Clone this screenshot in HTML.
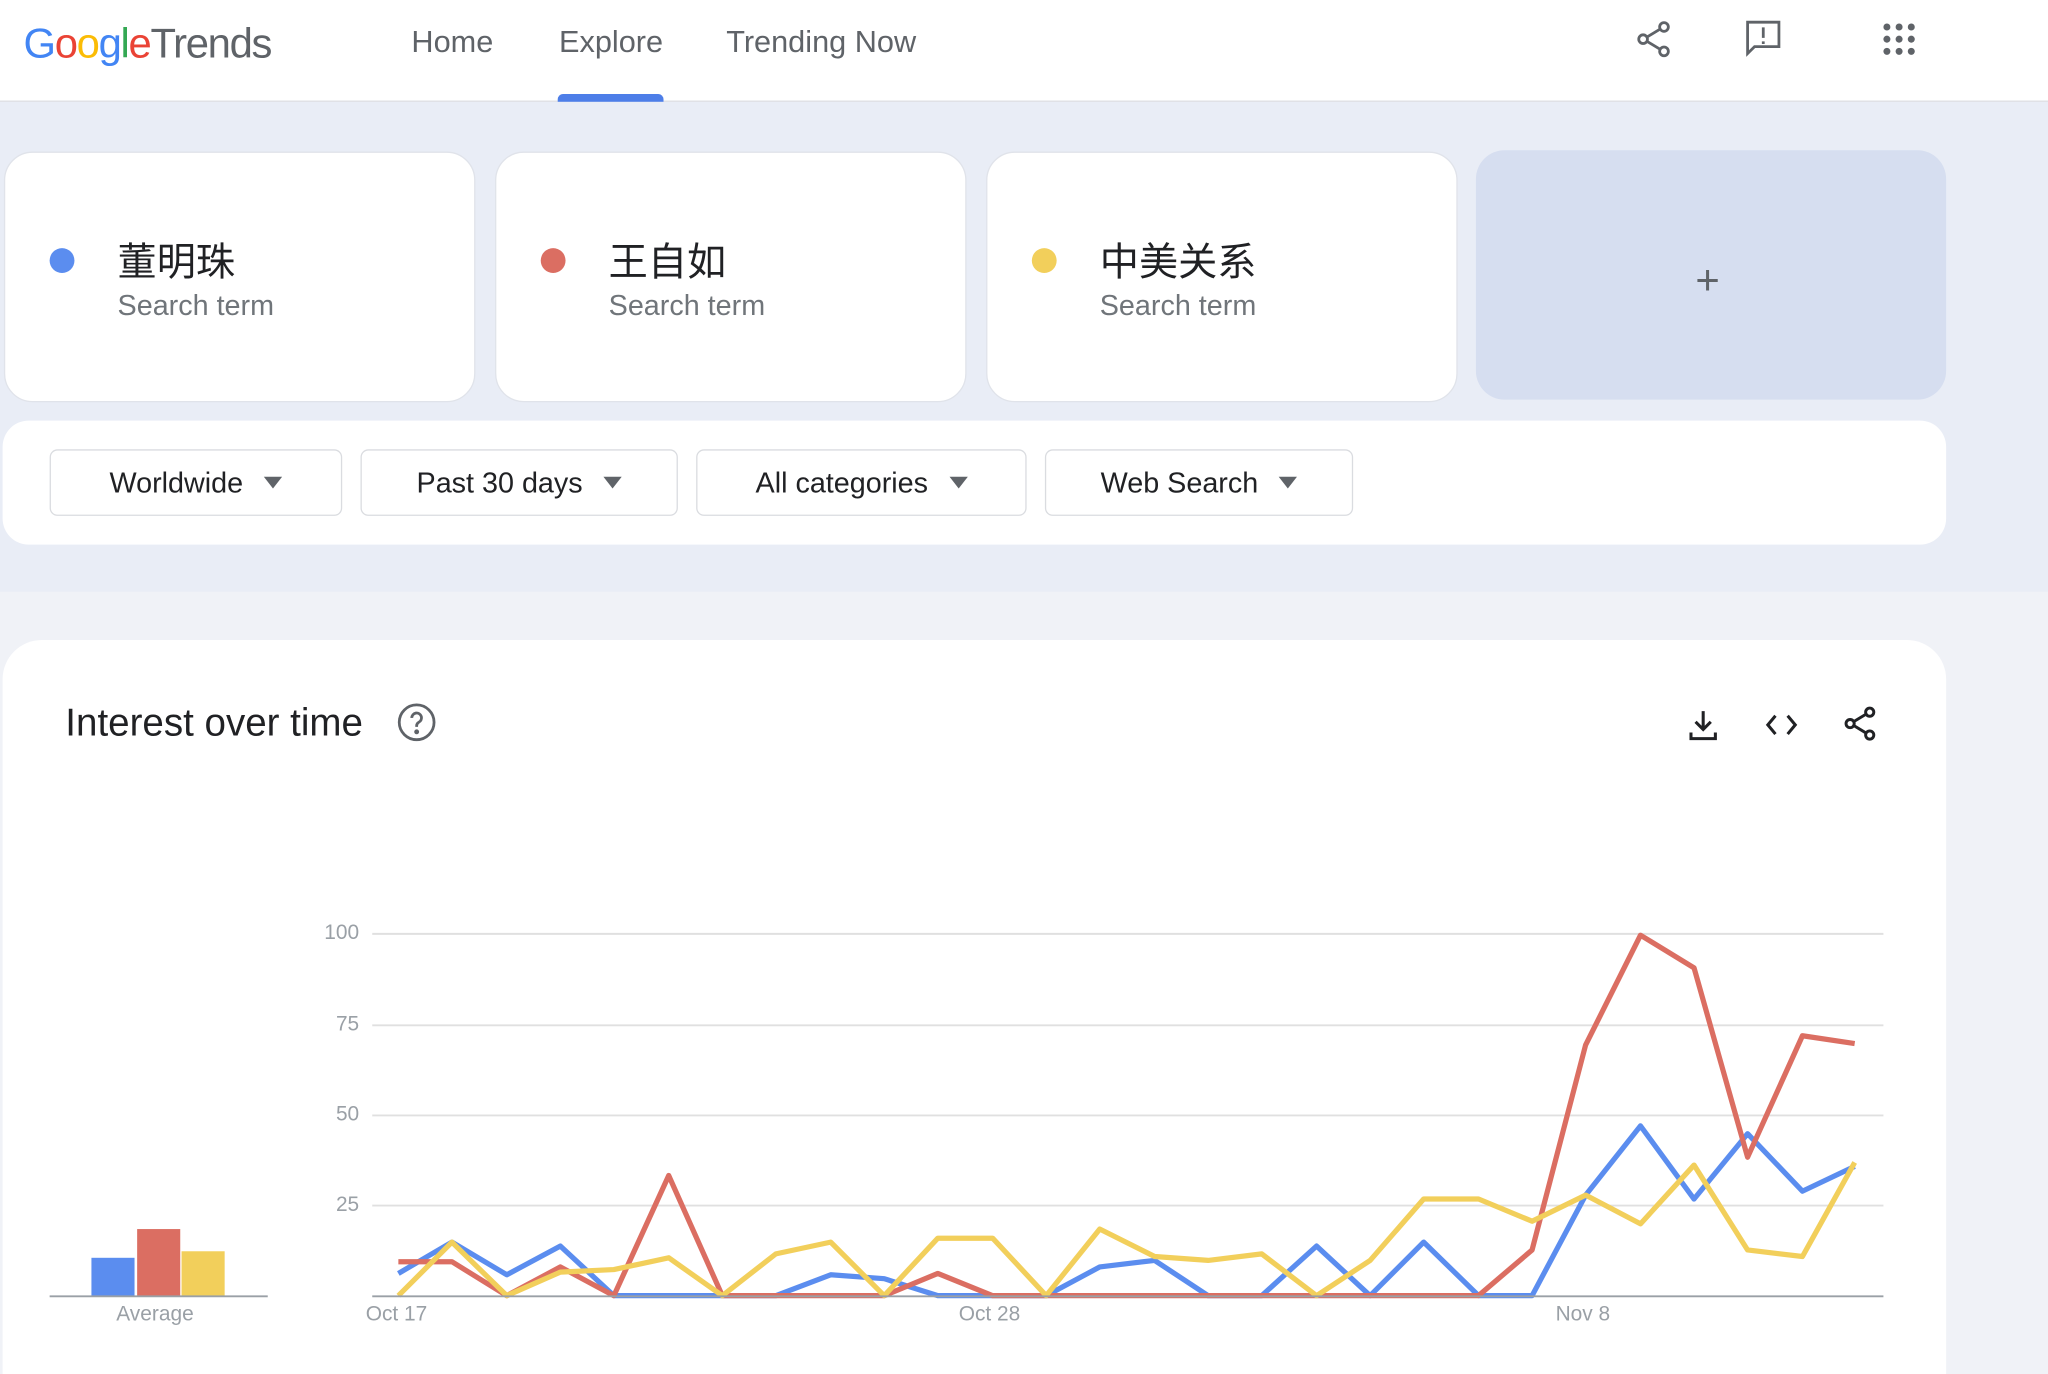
<!DOCTYPE html>
<html><head><meta charset="utf-8"><style>
*{margin:0;padding:0;box-sizing:border-box}
html,body{width:2048px;height:1374px;overflow:hidden;background:#f0f2f7}
#w{width:1568px;height:1052px;transform:scale(1.306122);transform-origin:0 0;position:relative;font-family:"Liberation Sans","Noto Sans CJK SC",sans-serif;background:#f0f2f7}
.a{position:absolute}
.hdr{left:0;top:0;width:1568px;height:78px;background:#fff;border-bottom:1px solid #dadce0}
.nav{top:19px;font-size:23.5px;color:#5f6368}
.band{left:0;top:78px;width:1568px;height:375px;background:#e9edf6}
.card{background:#fff;border:1px solid #e0e3ea;border-radius:22px}
.dot{width:19px;height:19px;border-radius:50%}
.term{font-size:30px;color:#202124;top:176px}
.st{font-size:22px;color:#70757a;top:221px}
.btn{top:344px;height:51px;border:1px solid #dadce0;border-radius:6px;background:#fff;font-size:22px;color:#202124;display:flex;align-items:center;justify-content:center;gap:16px}
.tri{width:0;height:0;border-left:7px solid transparent;border-right:7px solid transparent;border-top:9px solid #5f6368}
.yl{font-size:16px;color:#9aa0a6;width:40px;text-align:right;left:235px}
.xl{font-size:16px;color:#9aa0a6;top:998px}
</style></head><body><div id="w">
<div class="a hdr"></div>
<div class="a" style="left:18px;top:15px;font-size:32px;letter-spacing:-1px"><span style="color:#4285f4">G</span><span style="color:#ea4335">o</span><span style="color:#fbbc05">o</span><span style="color:#4285f4">g</span><span style="color:#34a853">l</span><span style="color:#ea4335">e</span><span style="color:#5f6368">Trends</span></div>
<div class="a nav" style="left:315px">Home</div>
<div class="a nav" style="left:428px">Explore</div>
<div class="a nav" style="left:556px">Trending Now</div>
<div class="a" style="left:427px;top:72px;width:81px;height:6px;background:#4d7ee8;border-radius:4px 4px 0 0"></div>
<svg class="a" style="left:1250px;top:14px" width="32" height="32" viewBox="0 0 24 24" fill="none" stroke="#5f6368" stroke-width="1.6"><circle cx="18" cy="5" r="2.5"/><circle cx="6" cy="12" r="2.5"/><circle cx="18" cy="19" r="2.5"/><path d="M8.2 10.8 15.8 6.2M8.2 13.2l7.6 4.6"/></svg>
<svg class="a" style="left:1334px;top:13px" width="32" height="32" viewBox="0 0 24 24" fill="none" stroke="#5f6368" stroke-width="1.6"><path d="M3 3h18v14H7l-4 4z"/><path d="M12 6v6M12 14v1.5"/></svg>
<svg class="a" style="left:1440px;top:16px" width="28" height="28" viewBox="0 0 24 24" fill="#5f6368"><circle cx="4" cy="4" r="2.3"/><circle cx="12" cy="4" r="2.3"/><circle cx="20" cy="4" r="2.3"/><circle cx="4" cy="12" r="2.3"/><circle cx="12" cy="12" r="2.3"/><circle cx="20" cy="12" r="2.3"/><circle cx="4" cy="20" r="2.3"/><circle cx="12" cy="20" r="2.3"/><circle cx="20" cy="20" r="2.3"/></svg>
<div class="a band"></div>
<div class="a card" style="left:3px;top:116px;width:361px;height:192px"></div>
<div class="a card" style="left:379px;top:116px;width:361px;height:192px"></div>
<div class="a card" style="left:755px;top:116px;width:361px;height:192px"></div>
<div class="a" style="left:1130px;top:115px;width:360px;height:191px;background:#d6def0;border-radius:22px"></div>
<div class="a" style="left:1298px;top:196px;font-size:32px;color:#5f6368;font-weight:300">+</div>
<div class="a dot" style="left:38px;top:190px;background:#5b8def"></div>
<div class="a dot" style="left:414px;top:190px;background:#db6e62"></div>
<div class="a dot" style="left:790px;top:190px;background:#f2cf5b"></div>
<div class="a term" style="left:90px">董明珠</div>
<div class="a term" style="left:466px">王自如</div>
<div class="a term" style="left:842px">中美关系</div>
<div class="a st" style="left:90px">Search term</div>
<div class="a st" style="left:466px">Search term</div>
<div class="a st" style="left:842px">Search term</div>
<div class="a" style="left:2px;top:322px;width:1488px;height:95px;background:#fff;border-radius:20px"></div>
<div class="a btn" style="left:38px;width:224px">Worldwide<span class="tri"></span></div>
<div class="a btn" style="left:276px;width:243px">Past 30 days<span class="tri"></span></div>
<div class="a btn" style="left:533px;width:253px">All categories<span class="tri"></span></div>
<div class="a btn" style="left:800px;width:236px">Web Search<span class="tri"></span></div>
<div class="a" style="left:2px;top:490px;width:1488px;height:600px;background:#fff;border-radius:30px"></div>
<div class="a" style="left:50px;top:537px;font-size:29.5px;color:#202124">Interest over time</div>
<svg class="a" style="left:303px;top:537px" width="32" height="32" viewBox="0 0 24 24" fill="none" stroke="#5f6368" stroke-width="1.6"><circle cx="12" cy="12" r="10"/><path d="M9.2 9.5a2.8 2.8 0 1 1 4 2.5c-.9.5-1.2 1-1.2 2v.6"/><circle cx="12" cy="17.5" r=".6" fill="#5f6368"/></svg>
<svg class="a" style="left:1290px;top:541px" width="28" height="28" viewBox="0 0 24 24" fill="none" stroke="#202124" stroke-width="2"><path d="M12 3v12M7 10l5 5 5-5M4 17v4h16v-4"/></svg>
<svg class="a" style="left:1349px;top:541px" width="30" height="28" viewBox="0 0 24 24" fill="none" stroke="#202124" stroke-width="2"><path d="M8 6l-5 6 5 6M16 6l5 6-5 6"/></svg>
<svg class="a" style="left:1409px;top:539px" width="30" height="30" viewBox="0 0 24 24" fill="none" stroke="#202124" stroke-width="1.8"><circle cx="18" cy="5" r="2.5"/><circle cx="6" cy="12" r="2.5"/><circle cx="18" cy="19" r="2.5"/><path d="M8.2 10.8 15.8 6.2M8.2 13.2l7.6 4.6"/></svg>
<div class="a yl" style="top:706px">100</div>
<div class="a yl" style="top:776px">75</div>
<div class="a yl" style="top:845px">50</div>
<div class="a yl" style="top:914px">25</div>
<div class="a xl" style="left:280px">Oct 17</div>
<div class="a xl" style="left:734px">Oct 28</div>
<div class="a xl" style="left:1191px">Nov 8</div>
<div class="a xl" style="left:89px">Average</div>
<svg class="a" style="left:0;top:0" width="1568" height="1052">
<g stroke="#e0e0e0" stroke-width="1.5"><line x1="285" y1="715" x2="1442" y2="715"/><line x1="285" y1="785" x2="1442" y2="785"/><line x1="285" y1="854" x2="1442" y2="854"/><line x1="285" y1="923" x2="1442" y2="923"/></g>
<rect x="70" y="963" width="33" height="29" fill="#5b8def"/>
<rect x="105" y="941" width="33" height="51" fill="#db6e62"/>
<rect x="139" y="958" width="33" height="34" fill="#f2cf5b"/>
<g fill="none" stroke-width="4" stroke-linejoin="round">
<polyline stroke="#5b8def" points="305,975 346,951 388,976 429,954 470,992 512,992 553,992 594,992 636,976 677,979 718,992 760,992 801,992 842,970 884,965 925,992 966,992 1008,954 1049,992 1090,951 1132,992 1173,992 1214,915 1256,862 1297,918 1338,868 1380,912 1420,893"/>
<polyline stroke="#db6e62" points="305,966 346,966 388,992 429,970 470,992 512,900 553,992 594,992 636,992 677,992 718,975 760,992 801,992 842,992 884,992 925,992 966,992 1008,992 1049,992 1090,992 1132,992 1173,957 1214,800 1256,716 1297,741 1338,886 1380,793 1420,799"/>
<polyline stroke="#f2cf5b" points="305,992 346,951 388,992 429,974 470,972 512,963 553,992 594,960 636,951 677,992 718,948 760,948 801,992 842,941 884,962 925,965 966,960 1008,992 1049,965 1090,918 1132,918 1173,935 1214,915 1256,937 1297,892 1338,957 1380,962 1420,890"/>
</g>
<line x1="285" y1="992.5" x2="1442" y2="992.5" stroke="#9aa0a6" stroke-width="1.5"/>
<line x1="38" y1="992.5" x2="205" y2="992.5" stroke="#9aa0a6" stroke-width="1.5"/>
</svg>
</div></body></html>
